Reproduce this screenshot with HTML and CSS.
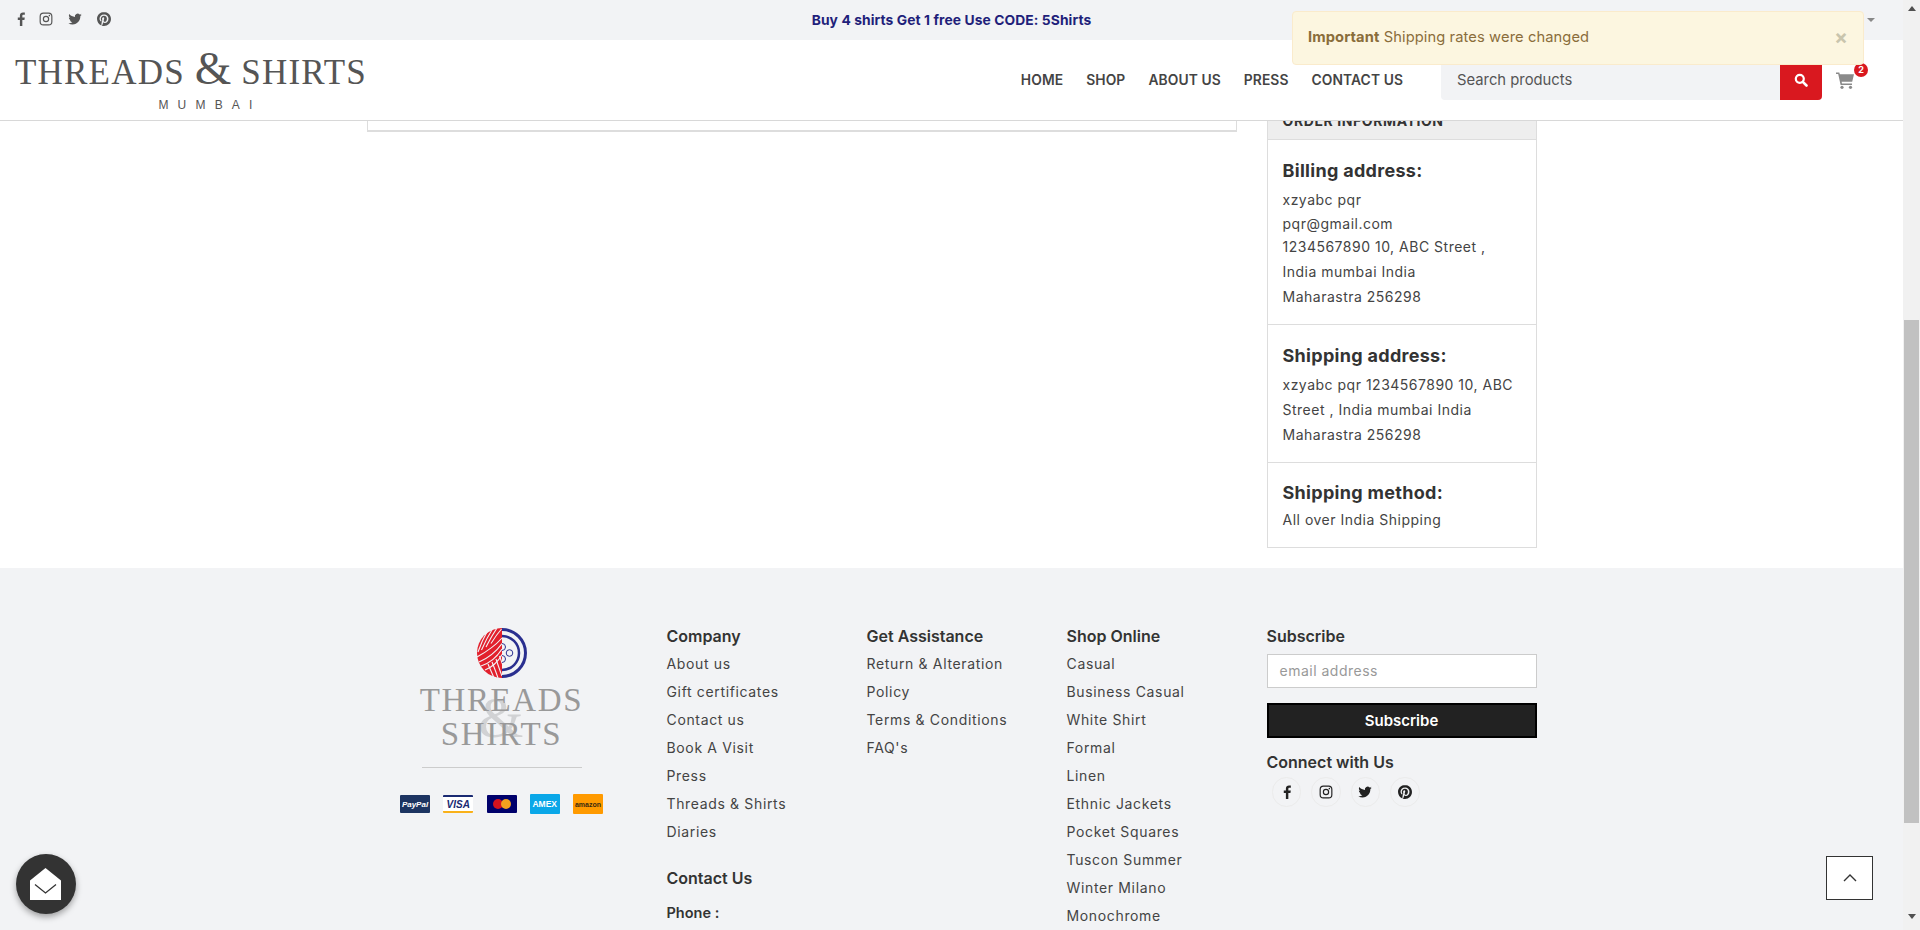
FILE: index.html
```html
<!DOCTYPE html>
<html lang="en">
<head>
<meta charset="utf-8">
<title>Threads &amp; Shirts</title>
<link rel="stylesheet" href="styles.css">
</head>
<body>
<svg class="defs" width="0" height="0" aria-hidden="true">
  <symbol id="i-fb" viewBox="0 0 24 24"><path d="M16 24V13.500h3.600l.6-4.200H16V6.700c0-1.200.3-2 2.100-2h2.200V1C19.900.9 18.600.8 17.100.8c-3.100 0-5.300 1.900-5.300 5.300v3.200H8.200v4.200h3.600V24z"/></symbol>
  <symbol id="i-ig" viewBox="0 0 24 24"><rect x="2" y="2" width="20" height="20" rx="5.500" fill="none" stroke="currentColor" stroke-width="2"/><circle cx="12" cy="12" r="4.500" fill="none" stroke="currentColor" stroke-width="2"/><circle cx="17.800" cy="6.200" r="1.300"/></symbol>
  <symbol id="i-tw" viewBox="0 0 24 24"><path d="M23.500 4.900c-.8.400-1.700.6-2.700.8 1-.6 1.700-1.500 2.100-2.600-.9.500-1.900.9-3 1.100A4.700 4.700 0 0 0 11.900 8.500C8 8.300 4.600 6.500 2.200 3.600c-1.300 2.200-.6 4.900 1.400 6.300-.8 0-1.500-.2-2.100-.6 0 2.300 1.600 4.200 3.800 4.700-.7.200-1.400.2-2.100.1.600 1.900 2.300 3.200 4.400 3.300A9.500 9.500 0 0 1 .6 19.300 13.300 13.300 0 0 0 7.800 21.400c8.700 0 13.600-7.300 13.300-14 .9-.6 1.700-1.500 2.400-2.500z"/></symbol>
  <symbol id="i-pin" viewBox="0 0 24 24"><path d="M12.017 0C5.396 0 .029 5.367.029 11.987c0 5.079 3.158 9.417 7.618 11.162-.105-.949-.199-2.403.041-3.439.219-.937 1.406-5.957 1.406-5.957s-.359-.72-.359-1.781c0-1.663.967-2.911 2.168-2.911 1.024 0 1.518.769 1.518 1.688 0 1.029-.653 2.567-.992 3.992-.285 1.193.6 2.165 1.775 2.165 2.128 0 3.768-2.245 3.768-5.487 0-2.861-2.063-4.869-5.008-4.869-3.41 0-5.409 2.562-5.409 5.199 0 1.033.394 2.143.889 2.741.099.12.112.225.085.345-.09.375-.293 1.199-.334 1.363-.053.225-.172.271-.401.165-1.495-.69-2.433-2.878-2.433-4.646 0-3.776 2.748-7.252 7.92-7.252 4.158 0 7.392 2.967 7.392 6.923 0 4.135-2.607 7.462-6.233 7.462-1.214 0-2.354-.629-2.758-1.379l-.749 2.848c-.269 1.045-1.004 2.352-1.498 3.146 1.123.345 2.306.535 3.55.535 6.607 0 11.985-5.365 11.985-11.987C23.97 5.39 18.592.026 11.985.026L12.017 0z"/></symbol>
</svg>
<div class="page">
  <div class="viewport">
    <div class="topbar">
      <div class="top-social">
        <svg class="ic ic-f"><use href="#i-fb"/></svg>
        <svg class="ic"><use href="#i-ig"/></svg>
        <svg class="ic"><use href="#i-tw"/></svg>
        <svg class="ic"><use href="#i-pin"/></svg>
      </div>
      <div class="promo">Buy 4 shirts Get 1 free Use CODE: 5Shirts</div>
      <div class="top-right"><span class="caret"></span></div>
    </div>
    <header class="header">
      <a class="logo">
        <span class="logo-main">THREADS <span class="logo-amp">&amp;</span> SHIRTS</span>
        <span class="logo-sub">MUMBAI</span>
      </a>
      <nav class="nav">
        <a>HOME</a><a>SHOP</a><a>ABOUT US</a><a>PRESS</a><a>CONTACT US</a>
      </nav>
      <div class="search">
        <span class="search-text">Search products</span>
        <span class="search-btn">
          <svg width="14" height="14" viewBox="0 0 14 14"><circle cx="5.800" cy="5.800" r="4" fill="none" stroke="#fff" stroke-width="2.200"/><path d="M8.800 8.800L12.500 12.500" stroke="#fff" stroke-width="2.600" stroke-linecap="round"/></svg>
        </span>
      </div>
      <div class="cart">
        <svg width="18" height="17" viewBox="0 0 18 17"><path fill="#8a8a8a" d="M0 0.500h3.300l.5 1.800H18l-1.800 7.500H5.600l.4 1.700h10v1.600H4.600L2.200 2.100H0z"/><circle cx="6" cy="15.300" r="1.600" fill="#8a8a8a"/><circle cx="14.500" cy="15.300" r="1.600" fill="#8a8a8a"/></svg>
        <span class="badge">2</span>
      </div>
    </header>
    <main class="content">
      <div class="order-card"></div>
      <aside class="order-info">
        <div class="info-head"><span>ORDER INFORMATION</span></div>
        <section class="info-sec">
          <h4>Billing address:</h4>
          <p class="tight">xzyabc pqr</p>
          <p class="tight">pqr@gmail.com</p>
          <p class="tight">1234567890 10, ABC Street ,</p>
          <p>India mumbai India</p>
          <p>Maharastra 256298</p>
        </section>
        <section class="info-sec info-sec-mid">
          <h4>Shipping address:</h4>
          <p>xzyabc pqr 1234567890 10, ABC<br>Street , India mumbai India<br>Maharastra 256298</p>
        </section>
        <section class="info-sec info-sec-last">
          <h4>Shipping method:</h4>
          <p>All over India Shipping</p>
        </section>
      </aside>
    </main>
    <footer class="footer">
      <div class="footer-grid">
        <div class="brand">
          <svg class="brand-mark" width="50" height="50" viewBox="0 0 50 50">
            <defs><clipPath id="left-half"><rect x="0" y="0" width="25" height="50"/></clipPath></defs>
            <g clip-path="url(#left-half)">
              <circle cx="25" cy="25" r="25" fill="#e2202c"/>
              <g fill="none" stroke="#f2f3f5" stroke-width="1.100">
                <path d="M0 29C9 24 18 18 25 10"/><path d="M2 34C11 30 19 24 25 15.500"/><path d="M4 38C13 35 20 29 25 21"/><path d="M8 42C15 39 21 34 25 26.500"/>
                <path d="M11 2C7 9 4 15 1 24"/><path d="M15.500 1C11 8 8 14 4.500 22"/><path d="M20 0C16 6 13 11 9 19"/><path d="M24.500 1C21 5 18 9 14 15.500"/>
                <path d="M11 36C13 41 15 45 17 50"/><path d="M15 34C17 39 19 44 21 50"/><path d="M19 31C21 37 23 43 25 48"/><path d="M22.500 28C24 32 25 35 27 40"/>
              </g>
            </g>
            <path d="M25 1.500A23.500 23.500 0 0 1 25 48.500" fill="none" stroke="#2a2f8f" stroke-width="3"/>
            <path d="M25 8A17 17 0 0 1 25 42" fill="none" stroke="#2a2f8f" stroke-width="2.500"/>
            <circle cx="32.500" cy="25" r="3.300" fill="none" stroke="#2a2f8f" stroke-width="1"/>
            <path d="M25 15.500A3.500 3.500 0 0 1 25 22.500M25 27.500A3.500 3.500 0 0 1 25 34.500" fill="none" stroke="#2a2f8f" stroke-width="1"/>
          </svg>
          <div class="brand-name">
            <span class="brand-amp">&amp;</span>
            <span>THREADS</span>
            <span>SHIRTS</span>
          </div>
          <div class="brand-rule"></div>
          <div class="pays">
            <span class="pay pay-paypal">PayPal</span>
            <span class="pay pay-visa">VISA</span>
            <span class="pay pay-mc"><i class="mc-a"></i><i class="mc-b"></i></span>
            <span class="pay pay-amex">AMEX</span>
            <span class="pay pay-amazon">amazon</span>
          </div>
        </div>
        <div class="fcol">
          <h5>Company</h5>
          <ul>
            <li>About us</li><li>Gift certificates</li><li>Contact us</li><li>Book A Visit</li><li>Press</li><li>Threads &amp; Shirts</li><li>Diaries</li>
          </ul>
          <h5 class="contact-head">Contact Us</h5>
          <div class="phone">Phone :</div>
        </div>
        <div class="fcol">
          <h5>Get Assistance</h5>
          <ul>
            <li>Return &amp; Alteration<br>Policy</li><li>Terms &amp; Conditions</li><li>FAQ's</li>
          </ul>
        </div>
        <div class="fcol">
          <h5>Shop Online</h5>
          <ul>
            <li>Casual</li><li>Business Casual</li><li>White Shirt</li><li>Formal</li><li>Linen</li><li>Ethnic Jackets</li><li>Pocket Squares</li><li>Tuscon Summer</li><li>Winter Milano</li><li>Monochrome</li>
          </ul>
        </div>
        <div class="fcol">
          <h5>Subscribe</h5>
          <div class="email">email address</div>
          <div class="sub-btn">Subscribe</div>
          <h5 class="connect">Connect with Us</h5>
          <div class="circles">
            <span class="circle"><svg class="ic ic-dark"><use href="#i-fb"/></svg></span>
            <span class="circle"><svg class="ic ic-dark"><use href="#i-ig"/></svg></span>
            <span class="circle"><svg class="ic ic-dark"><use href="#i-tw"/></svg></span>
            <span class="circle"><svg class="ic ic-dark"><use href="#i-pin"/></svg></span>
          </div>
        </div>
      </div>
    </footer>
  </div>
  <div class="scrollbar">
    <span class="arrow-up"></span>
    <div class="thumb"></div>
    <span class="arrow-down"></span>
  </div>
  <div class="alert"><span><b>Important</b> Shipping rates were changed</span><span class="alert-x">×</span></div>
  <div class="chat">
    <svg width="32" height="32" viewBox="0 0 32 32"><path fill="#fff" d="M0 12.500L15.500 0L31 12.500V32H0Z"/><path d="M5 16.500L15.500 25L26 16.500" fill="none" stroke="#333" stroke-width="1.300"/></svg>
  </div>
  <div class="to-top">
    <svg width="14" height="8" viewBox="0 0 14 8"><path d="M1 7L7 1L13 7" fill="none" stroke="#333" stroke-width="1.400"/></svg>
  </div>
</div>
</body>
</html>
```
FILE: styles.css
```css
* { box-sizing: border-box; }
html, body { margin: 0; padding: 0; height: 930px; overflow: hidden; }
body { font-family: Inter, "Liberation Sans", sans-serif; color: #333; background: #fff; }
.defs { position: absolute; }
.page { position: relative; display: flex; width: 1920px; height: 930px; overflow: hidden; }
.viewport { flex: 0 0 1903px; height: 930px; overflow: hidden; }

/* icons */
.ic { width: 14px; height: 14px; fill: #555; color: #555; display: block; }
.ic-f { margin-right: -3px; }
.ic-dark { fill: #222; color: #222; }

/* top bar */
.topbar { display: grid; grid-template-columns: 1fr auto 1fr; align-items: center; height: 40px; background: #f2f3f5; }
.top-social { display: flex; gap: 15px; padding: 0 0 3px 13px; }
.promo { font-size: 13.800px; font-weight: 700; color: #1f1f7a; letter-spacing: .1px; padding-bottom: 1px; }
.top-right { display: flex; justify-content: flex-end; padding-right: 28px; }
.caret { width: 0; height: 0; border-left: 4px solid transparent; border-right: 4px solid transparent; border-top: 4px solid #888; }

/* header */
.header { display: flex; align-items: center; height: 81px; padding: 0 49px 0 15px; background: #fff; border-bottom: 1px solid #d8d8d8; }
.logo { display: flex; flex-direction: column; align-items: center; width: 352px; color: #555; }
.logo-main { font-family: "Liberation Serif", serif; font-size: 35px; line-height: 36px; letter-spacing: 1.200px; white-space: nowrap; margin-top: 2px; }
.logo-amp { font-size: 47px; line-height: 36px; letter-spacing: 0; }
.logo-sub { font-family: "Liberation Sans", sans-serif; font-size: 12px; line-height: 14px; letter-spacing: 9.200px; margin-top: 7px; padding-left: 38px; }
.nav { display: flex; gap: 23px; margin-left: auto; font-size: 13.800px; font-weight: 600; color: #444; letter-spacing: .1px; }
.search { display: flex; align-items: stretch; width: 381px; height: 40px; margin-left: 38px; background: #f2f3f5; border-radius: 4px; }
.search-text { flex: 1; padding-left: 16px; font-size: 14.800px; line-height: 40px; color: #555; }
.search-btn { display: flex; align-items: center; justify-content: center; width: 42px; background: #d9181f; border-radius: 0 0 4px 0; }
.cart { position: relative; margin-left: 14px; height: 17px; }
.badge { position: absolute; top: -9px; left: 18px; width: 14px; height: 14px; border-radius: 50%; background: #d9181f; color: #fff; font-size: 9px; font-weight: 700; line-height: 14px; text-align: center; }

/* content */
.content { display: flex; align-items: flex-start; gap: 30px; width: 1170px; height: 447px; margin: 0 auto; }
.order-card { width: 870px; height: 11px; border: 1px solid #ddd; border-top: 0; border-bottom-width: 2px; }
.order-info { width: 270px; border: 1px solid #ddd; border-top: 0; font-size: 14px; color: #444; }
.info-head { height: 19px; overflow: hidden; background: #eee; border-bottom: 1px solid #ddd; }
.info-head span { display: block; margin-top: -10px; padding-left: 15px; font-size: 14px; font-weight: 700; letter-spacing: .6px; line-height: 20px; color: #333; }
.info-sec { padding: 19px 15px 15px; border-bottom: 1px solid #ddd; }
.info-sec h4 { margin: 0 0 5px; font-size: 18px; font-weight: 700; letter-spacing: .3px; line-height: 24px; color: #333; }
.info-sec p { margin: 0; line-height: 25px; letter-spacing: .5px; white-space: nowrap; }
.info-sec p.tight { line-height: 23.500px; }
.info-sec-mid { padding-bottom: 15px; }
.info-sec-mid h4 { margin-bottom: 4px; }
.info-sec-last { padding-top: 18px; border-bottom: 0; }
.info-sec-last h4 { margin-bottom: 2px; }

/* footer */
.footer { height: 362px; margin-top: 0; padding-top: 55px; background: #f2f3f5; }
.footer-grid { display: grid; grid-template-columns: 270px 170px 170px 170px 270px; gap: 30px; width: 1170px; margin: 0 auto; }
.brand { display: flex; flex-direction: column; align-items: center; padding-top: 5px; }
.brand-mark { display: block; }
.brand-name { position: relative; display: flex; flex-direction: column; align-items: center; margin-top: 5px; font-family: "Liberation Serif", serif; font-size: 33px; line-height: 34px; letter-spacing: 1.600px; color: #999; }
.brand-amp { position: absolute; top: 10px; left: 50%; transform: translateX(-50%); font-size: 58px; line-height: 50px; color: #c9cbcd; opacity: .8; }
.brand-name span:not(.brand-amp) { position: relative; }
.brand-rule { width: 160px; height: 1px; margin-top: 16px; background: #ccc; }
.pays { display: flex; align-items: center; gap: 13.250px; margin-top: 26px; }
.pay { display: flex; align-items: center; justify-content: center; width: 30px; height: 18px; font-family: "Liberation Sans", sans-serif; font-size: 8px; font-weight: 700; border-radius: 1px; }
.pay-paypal { background: #1d3461; color: #fff; font-style: italic; }
.pay-visa { background: #fff; color: #1a2a72; font-size: 10px; font-style: italic; border-top: 2px solid #1a2a72; border-bottom: 2px solid #f9b11a; }
.pay-mc { background: #00006b; }
.mc-a, .mc-b { display: block; width: 10px; height: 10px; border-radius: 50%; }
.mc-a { background: #d4121f; }
.mc-b { background: #f2a01f; margin-left: -2px; }
.pay-amex { background: #0aa7e8; color: #fff; height: 20px; font-size: 8.500px; }
.pay-amazon { background: #ff9a00; color: #3a2a10; font-size: 7px; height: 20px; }
.fcol h5 { margin: 0; font-size: 16px; font-weight: 600; line-height: 27px; color: #333; }
.fcol ul { margin: 0; padding: 0; list-style: none; font-size: 14px; line-height: 28px; color: #444; letter-spacing: .65px; }
.fcol .contact-head { margin-top: 18px; line-height: 28px; }
.phone { margin-top: 7px; font-size: 14.500px; font-weight: 600; line-height: 28px; color: #333; }
.email { height: 34px; margin-top: 4px; padding-left: 12px; background: #fff; border: 1px solid #ccc; font-size: 14px; line-height: 32px; color: #999; letter-spacing: .5px; }
.sub-btn { height: 35px; margin-top: 15px; background: #222; border: 2px solid #000; color: #fff; font-size: 15px; font-weight: 600; line-height: 31px; text-align: center; }
.fcol .connect { margin-top: 11px; line-height: 26px; }
.circles { display: flex; gap: 10px; margin: 2px 0 0 5px; }
.circle { display: flex; align-items: center; justify-content: center; width: 29.500px; height: 29.500px; border: 1px solid #ebebeb; border-radius: 50%; }

/* scrollbar */
.scrollbar { position: relative; flex: 0 0 17px; height: 930px; background: #f1f1f1; display: flex; flex-direction: column; align-items: center; }
.thumb { width: 15px; height: 503px; margin-top: 309px; background: #c1c1c1; }
.arrow-up { width: 0; height: 0; margin-top: 6px; border-left: 4px solid transparent; border-right: 4px solid transparent; border-bottom: 5px solid #505050; }
.arrow-down { width: 0; height: 0; margin-top: 91px; border-left: 4px solid transparent; border-right: 4px solid transparent; border-top: 5px solid #505050; }

/* overlays */
.alert { position: absolute; top: 11px; left: 1292px; display: flex; align-items: center; justify-content: space-between; width: 572px; height: 54px; padding: 0 15px 2px; background: #fcf6e0; border: 1px solid #faebcc; border-radius: 4px; font-size: 14.700px; letter-spacing: .1px; color: #8a6d3b; }
.alert b { font-weight: 700; }
.alert-x { font-size: 20px; font-weight: 700; color: #c9c5ad; }
.chat { position: absolute; left: 16px; top: 854px; display: flex; align-items: center; justify-content: center; width: 60px; height: 60px; border-radius: 50%; background: #333; box-shadow: 0 3px 6px rgba(0,0,0,.35); }
.to-top { position: absolute; left: 1826px; top: 856px; display: flex; align-items: center; justify-content: center; width: 47px; height: 44px; background: #fff; border: 1px solid #333; }
```
